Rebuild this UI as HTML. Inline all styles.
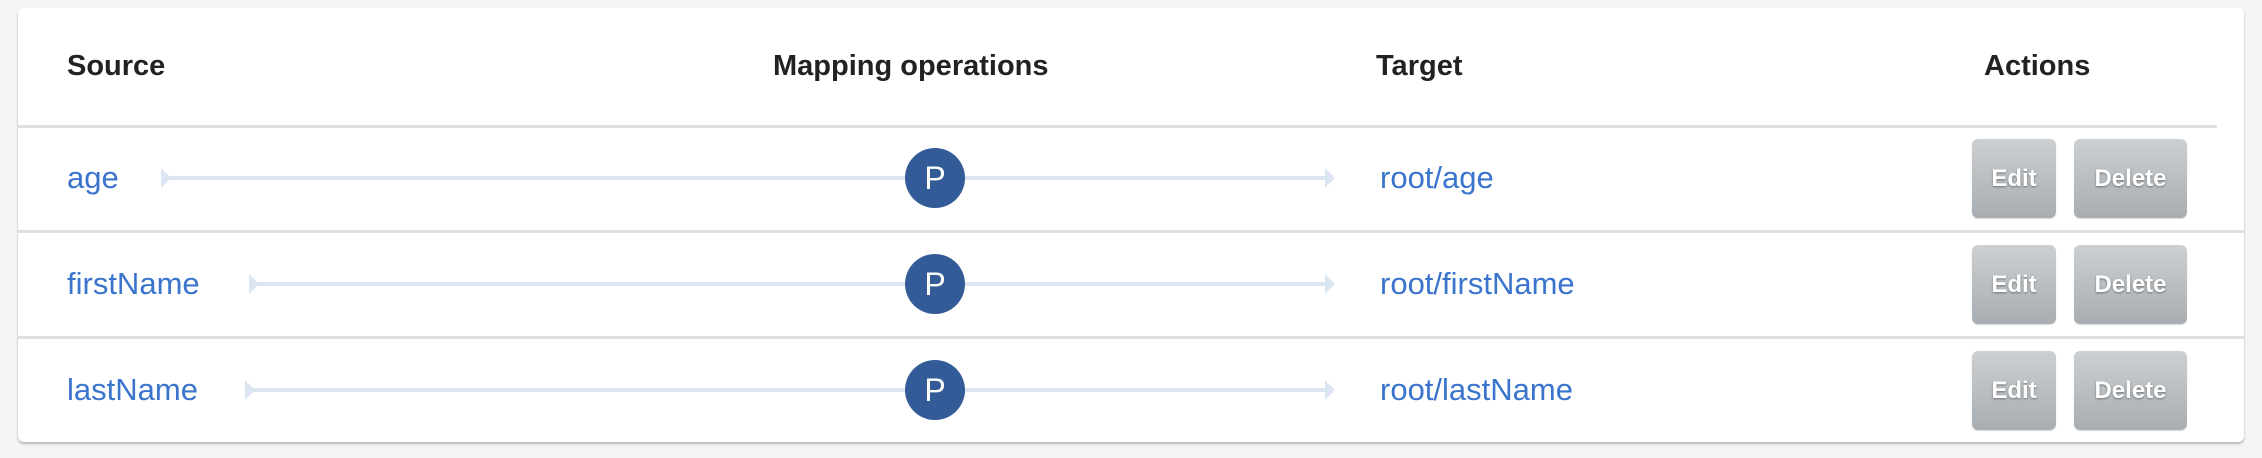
<!DOCTYPE html>
<html><head><style>
body{margin:0;width:2262px;height:458px;background:#f4f4f4;font-family:"Liberation Sans",sans-serif;position:relative;overflow:hidden}
.card{position:absolute;left:18px;top:8px;width:2226px;height:434px;background:#fff;border-radius:6px;box-shadow:0 2px 2px rgba(0,0,0,.25)}
.h{position:absolute;top:50px;font-size:29px;font-weight:bold;color:#222}
.hl{position:absolute;left:18px;width:2199px;height:3px;background:#e0e0e0}
.t{position:absolute;font-size:31px;color:#3a74cc;transform:translateY(-50%)}
.ln{position:absolute;height:4px;background:#dce6f3;transform:translateY(-50%)}
.tri{position:absolute;width:0;height:0;border-top:10px solid transparent;border-bottom:10px solid transparent;border-left:10px solid #dce6f3;transform:translateY(-50%)}
.c{position:absolute;left:905px;width:60px;height:60px;border-radius:50%;background:#335b98;color:#fff;font-size:32px;text-align:center;line-height:60px;transform:translateY(-50%)}
.b{position:absolute;height:79px;border-radius:6px;background:linear-gradient(#ccd0d3,#a8adb1);color:#fff;font-size:24px;font-weight:bold;text-align:center;line-height:79px;text-shadow:0 1px 2px rgba(0,0,0,.4);box-shadow:0 1px 1px rgba(0,0,0,.15)}
</style></head><body>
<div class="card"></div>
<div class="h" style="left:67px">Source</div>
<div class="h" style="left:773px">Mapping operations</div>
<div class="h" style="left:1376px">Target</div>
<div class="h" style="left:1984px">Actions</div>
<div class="hl" style="top:125px"></div>
<div class="hl" style="top:230px;width:2226px"></div>
<div class="hl" style="top:336px;width:2226px"></div>

<div class="t" style="left:67px;top:178px">age</div>
<div class="tri" style="left:161px;top:178px"></div>
<div class="ln" style="left:166px;width:1160px;top:178px"></div>
<div class="tri" style="left:1325px;top:178px"></div>
<div class="c" style="top:178px">P</div>
<div class="t" style="left:1380px;top:178px">root/age</div>
<div class="b" style="left:1972px;top:139px;width:84px">Edit</div>
<div class="b" style="left:2074px;top:139px;width:113px">Delete</div>

<div class="t" style="left:67px;top:284px">firstName</div>
<div class="tri" style="left:249px;top:284px"></div>
<div class="ln" style="left:254px;width:1072px;top:284px"></div>
<div class="tri" style="left:1325px;top:284px"></div>
<div class="c" style="top:284px">P</div>
<div class="t" style="left:1380px;top:284px">root/firstName</div>
<div class="b" style="left:1972px;top:245px;width:84px">Edit</div>
<div class="b" style="left:2074px;top:245px;width:113px">Delete</div>

<div class="t" style="left:67px;top:390px">lastName</div>
<div class="tri" style="left:245px;top:390px"></div>
<div class="ln" style="left:250px;width:1076px;top:390px"></div>
<div class="tri" style="left:1325px;top:390px"></div>
<div class="c" style="top:390px">P</div>
<div class="t" style="left:1380px;top:390px">root/lastName</div>
<div class="b" style="left:1972px;top:351px;width:84px">Edit</div>
<div class="b" style="left:2074px;top:351px;width:113px">Delete</div>
</body></html>
